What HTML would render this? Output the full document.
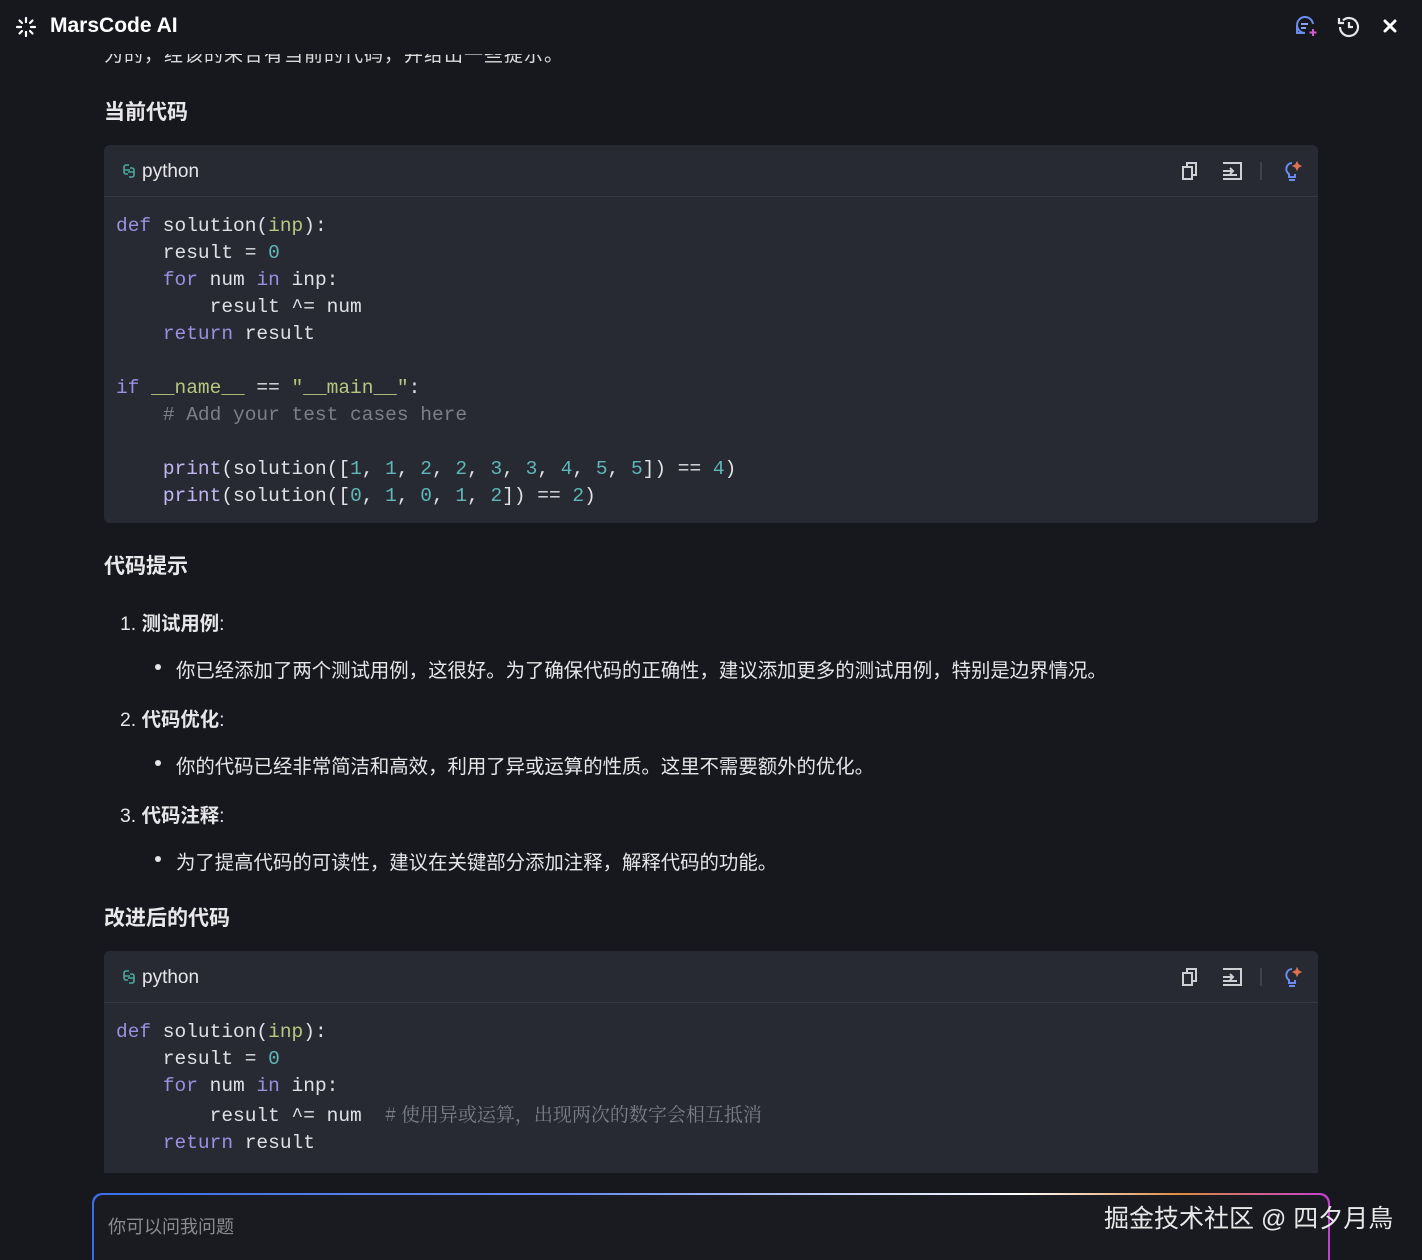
<!DOCTYPE html>
<html><head><meta charset="utf-8"><style>
html,body{margin:0;width:1422px;height:1260px;overflow:hidden}
body{background:#17181d;position:relative;font-family:"Liberation Sans","Noto Sans CJK SC",sans-serif;color:#e6e6e8}
.hdr{position:absolute;left:0;top:0;width:1422px;height:54px;background:#17181d;z-index:2}
.title{position:absolute;left:50px;top:14px;font-size:21px;font-weight:bold;color:#fff}
.abs{position:absolute}
h3{position:absolute;left:104px;margin:0;font-size:21px;font-weight:bold;color:#e8e8ea}
.cb{position:absolute;left:104px;width:1214px;background:#272a33;border-radius:6px}
.cbh{height:51px;border-bottom:1px solid #353843;position:relative}
.lang{position:absolute;left:38px;top:16px;font-size:19px;color:#e6e6e8}
pre{margin:0;position:absolute;left:12px;font-family:"Liberation Mono",monospace;font-size:19.5px;line-height:27px;color:#dfe1e6}
.k{color:#9d8fe0}.n{color:#5fb7b7}.s{color:#b8c77f}.c{color:#7c7f88}.p{color:#c3b6f0}
.li{position:absolute;font-size:19.4px;color:#e6e6e8}
.dot{position:absolute;width:6px;height:6px;border-radius:3px;background:#e6e6e8}
</style></head><body>
<div class="abs" style="left:104px;top:40px;font-size:19px;color:#ddd;letter-spacing:1px">为的，经该的来合有当前的代码，并给出一些提示。</div>
<div class="hdr">
<svg class="abs" style="left:15px;top:16px" width="22" height="22" viewBox="0 0 22 22" stroke="#fff" stroke-width="2.2" stroke-linecap="round"><path d="M11 2v4M11 16v4M2 11h4M16 11h4M4.5 4.5l2.5 2.5M15 15l2.5 2.5M17.5 4.5L15 7M7 15l-2.5 2.5"/></svg>
<div class="title">MarsCode AI</div>
<svg class="abs" style="left:1293px;top:14px" width="26" height="26" viewBox="0 0 26 26" fill="none" stroke-width="2"><path d="M20 10a8 8 0 1 0-8 9H4V11" stroke="#6a8cf0"/><path d="M8 10h7M8 14h5" stroke="#8aa0f0"/><path d="M20 15v7M16.5 18.5h7" stroke="#d55ad0"/></svg>
<svg class="abs" style="left:1336px;top:14px" width="26" height="26" viewBox="0 0 26 26" fill="none" stroke="#e6e6e8" stroke-width="2.2"><path d="M4 13a9 9 0 1 0 3-6.7"/><path d="M3 4v5h5"/><path d="M13 8v5h4"/></svg>
<svg class="abs" style="left:1383px;top:19px" width="14" height="14" viewBox="0 0 14 14" stroke="#fff" stroke-width="3" stroke-linecap="round"><path d="M2 2l10 10M12 2L2 12"/></svg>
</div>
<h3 style="top:96px">当前代码</h3>
<div class="cb" style="top:145px;height:378px">
<div class="cbh"><svg class="abs" style="left:17px;top:18px" width="16" height="16" viewBox="0 0 16 16" fill="none" stroke="#4fa8a0" stroke-width="1.6"><path d="M8 2H5a2 2 0 0 0-2 2v3h6M8 14h3a2 2 0 0 0 2-2V9H7M3 7v2a2 2 0 0 0 2 2h2M13 9V7a2 2 0 0 0-2-2H9"/></svg><span class="lang">python</span>
<svg class="abs" style="left:1077px;top:16px" width="18" height="20" viewBox="0 0 18 20" fill="none" stroke="#cfd0d4" stroke-width="2"><rect x="2" y="6" width="9" height="12"/><path d="M6 6V2h9v12h-4"/></svg>
<svg class="abs" style="left:1117px;top:16px" width="22" height="20" viewBox="0 0 22 20" fill="none" stroke="#cfd0d4" stroke-width="2"><path d="M2 2h18v16H2M2 10h10M9 7l3 3-3 3M2 14h14"/></svg>
<div class="abs" style="left:1156px;top:17px;width:2px;height:18px;background:#3f424c"></div>
<svg class="abs" style="left:1178px;top:14px" width="22" height="24" viewBox="0 0 22 24" fill="none" stroke-width="2"><path d="M10 4a6 6 0 0 0-3 11v3h6v-3" stroke="#6a8cf0"/><path d="M7 21h6" stroke="#6a8cf0"/><path d="M15 3l1.3 2.7L19 7l-2.7 1.3L15 11l-1.3-2.7L11 7l2.7-1.3z" fill="#e07050" stroke="#e07050" stroke-width="1"/></svg></div>
<pre style="top:68px"><span class="k">def</span> solution(<span class="s">inp</span>):
    result = <span class="n">0</span>
    <span class="k">for</span> num <span class="k">in</span> inp:
        result ^= num
    <span class="k">return</span> result

<span class="k">if</span> <span class="s">__name__</span> == <span class="s">"__main__"</span>:
    <span class="c"># Add your test cases here</span>

    <span class="p">print</span>(solution([<span class="n">1</span>, <span class="n">1</span>, <span class="n">2</span>, <span class="n">2</span>, <span class="n">3</span>, <span class="n">3</span>, <span class="n">4</span>, <span class="n">5</span>, <span class="n">5</span>]) == <span class="n">4</span>)
    <span class="p">print</span>(solution([<span class="n">0</span>, <span class="n">1</span>, <span class="n">0</span>, <span class="n">1</span>, <span class="n">2</span>]) == <span class="n">2</span>)</pre>
</div>
<h3 style="top:550px">代码提示</h3>
<div class="li" style="left:120px;top:607px">1. <b>测试用例</b>:</div>
<div class="dot" style="left:155px;top:664px"></div><div class="li" style="left:176px;top:654px">你已经添加了两个测试用例，这很好。为了确保代码的正确性，建议添加更多的测试用例，特别是边界情况。</div>
<div class="li" style="left:120px;top:703px">2. <b>代码优化</b>:</div>
<div class="dot" style="left:155px;top:760px"></div><div class="li" style="left:176px;top:750px">你的代码已经非常简洁和高效，利用了异或运算的性质。这里不需要额外的优化。</div>
<div class="li" style="left:120px;top:799px">3. <b>代码注释</b>:</div>
<div class="dot" style="left:155px;top:856px"></div><div class="li" style="left:176px;top:846px">为了提高代码的可读性，建议在关键部分添加注释，解释代码的功能。</div>
<h3 style="top:902px">改进后的代码</h3>
<div class="cb" style="top:951px;height:222px;border-radius:6px 6px 0 0">
<div class="cbh"><svg class="abs" style="left:17px;top:18px" width="16" height="16" viewBox="0 0 16 16" fill="none" stroke="#4fa8a0" stroke-width="1.6"><path d="M8 2H5a2 2 0 0 0-2 2v3h6M8 14h3a2 2 0 0 0 2-2V9H7M3 7v2a2 2 0 0 0 2 2h2M13 9V7a2 2 0 0 0-2-2H9"/></svg><span class="lang">python</span>
<svg class="abs" style="left:1077px;top:16px" width="18" height="20" viewBox="0 0 18 20" fill="none" stroke="#cfd0d4" stroke-width="2"><rect x="2" y="6" width="9" height="12"/><path d="M6 6V2h9v12h-4"/></svg>
<svg class="abs" style="left:1117px;top:16px" width="22" height="20" viewBox="0 0 22 20" fill="none" stroke="#cfd0d4" stroke-width="2"><path d="M2 2h18v16H2M2 10h10M9 7l3 3-3 3M2 14h14"/></svg>
<div class="abs" style="left:1156px;top:17px;width:2px;height:18px;background:#3f424c"></div>
<svg class="abs" style="left:1178px;top:14px" width="22" height="24" viewBox="0 0 22 24" fill="none" stroke-width="2"><path d="M10 4a6 6 0 0 0-3 11v3h6v-3" stroke="#6a8cf0"/><path d="M7 21h6" stroke="#6a8cf0"/><path d="M15 3l1.3 2.7L19 7l-2.7 1.3L15 11l-1.3-2.7L11 7l2.7-1.3z" fill="#e07050" stroke="#e07050" stroke-width="1"/></svg></div>
<pre style="top:68px"><span class="k">def</span> solution(<span class="s">inp</span>):
    result = <span class="n">0</span>
    <span class="k">for</span> num <span class="k">in</span> inp:
        result ^= num  <span class="c" style="font-family:'Noto Serif CJK SC',serif;font-size:19px"># 使用异或运算，出现两次的数字会相互抵消</span>
    <span class="k">return</span> result</pre>
</div>
<div class="abs" style="left:92px;top:1193px;width:1238px;height:67px;border-radius:10px 10px 0 0;background:linear-gradient(90deg,#3a6ee8,#6a8cf0 40%,#fff 75%,#e08a40 88%,#c040d0)"></div>
<div class="abs" style="left:94px;top:1195px;width:1234px;height:65px;border-radius:9px 9px 0 0;background:#1a1b20"></div>
<div class="abs" style="left:108px;top:1213px;font-size:18px;color:#8a8c92">你可以问我问题</div>
<div class="abs" style="left:1104px;top:1199px;font-size:25px;color:#e8e8e8">掘金技术社区 @ 四夕月鳥</div>
</body></html>
